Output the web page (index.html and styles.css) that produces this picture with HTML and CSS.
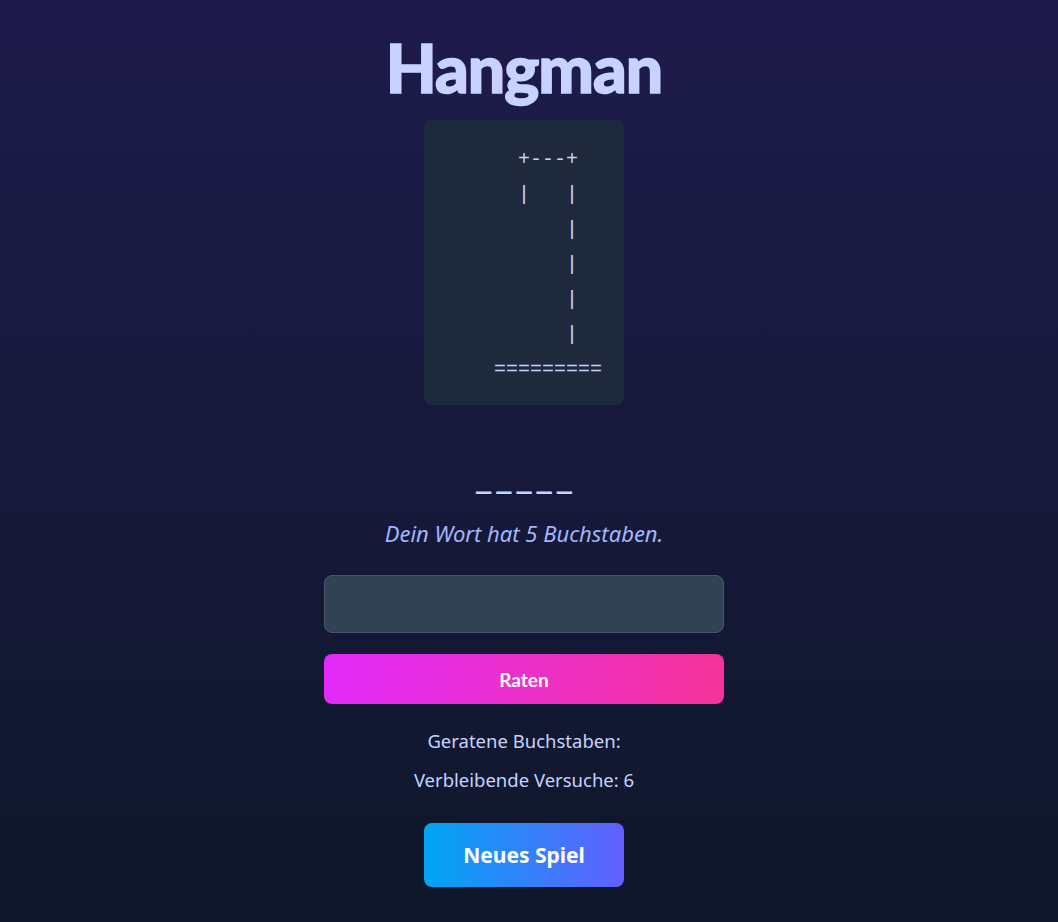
FILE: index.html
```html
<!DOCTYPE html>
<html lang="de">
<head>
<meta charset="utf-8">
<title>Hangman</title>
<link rel="stylesheet" href="styles.css">
</head>
<body>
<main class="app">
  <h1 class="title">Hangman</h1>
  <pre class="gallows">  +---+
  |   |
      |
      |
      |
      |
=========</pre>
  <div class="word">_____</div>
  <p class="hint">Dein Wort hat 5 Buchstaben.</p>
  <input class="guess-input" type="text" aria-label="Buchstabe">
  <button class="guess-btn">Raten</button>
  <p class="info info-first">Geratene Buchstaben: </p>
  <p class="info">Verbleibende Versuche: 6</p>
  <button class="new-btn">Neues Spiel</button>
</main>
</body>
</html>
```

FILE: styles.css
```css
html, body {
  margin: 0;
  padding: 0;
}
body {
  min-height: 922px;
  background: linear-gradient(to bottom, #1e1b4b, #0f172a);
  font-family: "Noto Sans", "Open Sans", sans-serif;
  color: #c7d2fe;
}
.app {
  display: flex;
  flex-direction: column;
  align-items: center;
  padding-top: 32px;
  padding-right: 10px;
}
.title {
  margin: 0;
  font-family: "Lato", sans-serif;
  font-weight: 900;
  font-size: 66px;
  line-height: 72px;
  color: #c7d2fe;
  letter-spacing: -1px;
  -webkit-text-stroke: 1.5px #c7d2fe;
}
.gallows {
  margin: 16px 0 0;
  box-sizing: border-box;
  width: 200px;
  padding: 22px 20px 18px 70px;
  background: #1e293b;
  border-radius: 8px;
  font-family: "Liberation Mono", monospace;
  font-size: 20px;
  line-height: 35px;
  color: #c7d2fe;
}
.word {
  margin-top: 50px;
  font-size: 36px;
  font-weight: 600;
  line-height: 40px;
  letter-spacing: 5px;
  padding-left: 5px;
  color: #c7d2fe;
}
.hint {
  margin: 23px 0 0;
  font-size: 22px;
  line-height: 30px;
  font-style: italic;
  color: #a5b4fc;
}
.guess-input {
  margin-top: 27px;
  box-sizing: border-box;
  width: 400px;
  height: 58px;
  background: #334155;
  border: 1px solid #475569;
  border-radius: 8px;
  color: #e0e7ff;
  font-size: 20px;
  padding: 0 12px;
}
.guess-btn {
  margin-top: 21px;
  width: 400px;
  height: 50px;
  border: none;
  border-radius: 8px;
  background: linear-gradient(to right, #e12afb, #f6339a);
  color: #fff;
  font-family: "Lato", sans-serif;
  font-weight: 700;
  font-size: 19px;
}
.info {
  margin: 0;
  font-size: 18.5px;
  line-height: 39px;
  color: #c7d2fe;
}
.info-first {
  margin-top: 17px;
}
.new-btn {
  margin-top: 24px;
  width: 200px;
  height: 64px;
  border: none;
  border-radius: 8px;
  background: linear-gradient(to right, #00a6f4, #625fff);
  color: #fff;
  font-family: "Noto Sans", sans-serif;
  font-weight: 700;
  font-size: 21px;
}
```
